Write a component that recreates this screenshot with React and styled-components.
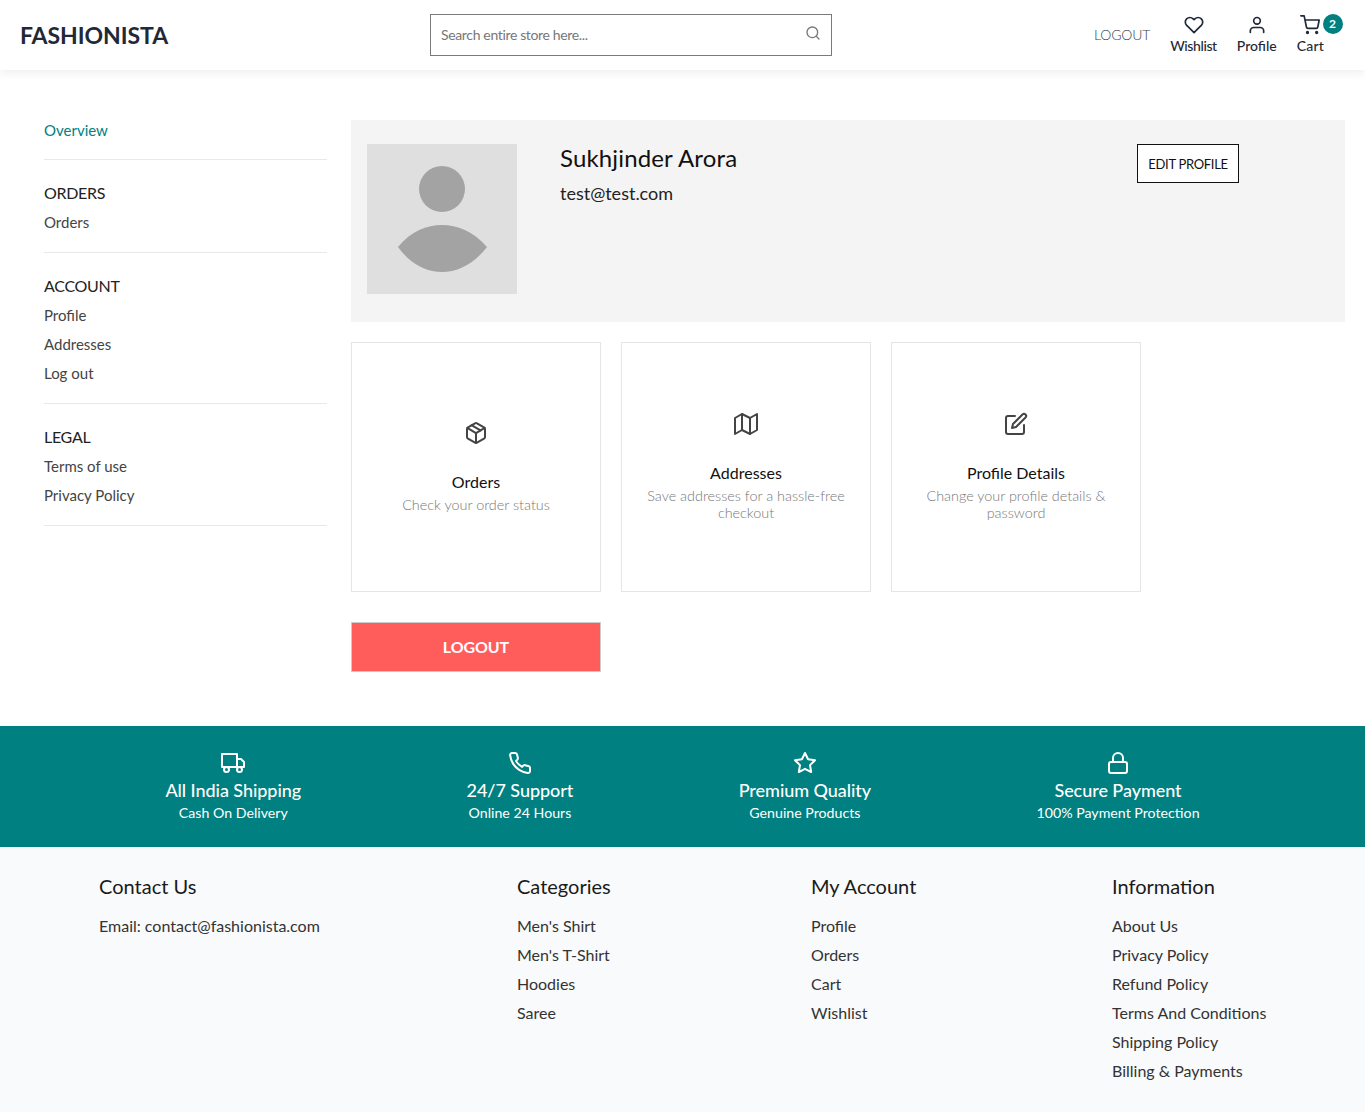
import React from "react";
import styled, { createGlobalStyle } from "styled-components";
import { FiHeart, FiShoppingCart, FiSearch, FiPackage, FiMap, FiEdit, FiTruck, FiPhone, FiStar, FiLock, FiUser } from "react-icons/fi";

const Global = createGlobalStyle`
  * { box-sizing: border-box; }
  html, body { margin: 0; background: #fff; font-family: "Lato", "Liberation Sans", sans-serif; }
  a { text-decoration: none; color: inherit; }
`;

const Header = styled.header`
  height: 70px; display: flex; align-items: center; position: relative;
  padding: 0 20px; background: #fff; box-shadow: 0 4px 8px rgba(0,0,0,.06);
`;
const Logo = styled.div`
  width: 410px; font-size: 23px; font-weight: 700; color: #1f2937; letter-spacing: -.05px;
`;
const Search = styled.div`
  width: 402px; height: 42px; border: 1px solid #7a7a7a; display: flex; align-items: center;
  justify-content: space-between; padding: 0 10px 2px; color: #777; font-size: 14px; letter-spacing: -.35px;
  svg { font-size: 16px; color: #777; margin-top: -2px; }
`;
const Actions = styled.div`
  margin-left: auto; display: flex; align-items: center; gap: 20px; padding-right: 21px;
`;
const TopLogout = styled.span`
  font-size: 14px; color: #374151; margin-bottom: 1px; font-weight: 300; letter-spacing: -.15px;
`;
const Action = styled.div`
  display: flex; flex-direction: column; align-items: center; position: relative;
  color: #1f2937; font-size: 14px; font-weight: 500; line-height: 18px; gap: 2px;
  letter-spacing: ${p => p.$track || 0};
  svg { font-size: 20px; display: block; }
`;
const Badge = styled.span`
  position: absolute; left: 26px; top: -1px; width: 20px; height: 20px; border-radius: 50%;
  background: #008080; color: #fff; font-size: 12px; font-weight: 700;
  display: flex; align-items: center; justify-content: center;
`;

const Body = styled.div`
  display: flex; padding: 50px 20px 54px 44px; gap: 24px; height: 656px;
`;
const Side = styled.aside`
  width: 283px; flex: none;
`;
const SideGroup = styled.div`
  border-bottom: 1px solid #e8e8e8; padding: ${p => p.$first ? "0 0 19px" : "19px 0 15px"};
`;
const SideTitle = styled.div`
  font-size: 16px; line-height: 28px; margin-bottom: 1px; color: #222; letter-spacing: -.3px;
`;
const SideLink = styled.a`
  display: block; font-size: 15px; font-weight: 400;
  line-height: ${p => p.$active ? "20px" : "29px"};
  color: ${p => p.$active ? "#008080" : "#444"};
`;
const Main = styled.main`
  flex: 1; display: flex; flex-direction: column; align-items: flex-start;
`;
const ProfileBox = styled.section`
  width: 100%; height: 202px; background: #f4f4f4; padding: 24px 16px; display: flex; position: relative;
`;
const Avatar = styled.div`
  width: 150px; height: 150px; flex: none; background: #dfdfdf;
  svg { display: block; }
`;
const Who = styled.div`
  margin: -1px 0 0 43px; flex: 1;
`;
const Name = styled.div`
  font-size: 24px; line-height: 30px; color: #111; letter-spacing: .15px;
`;
const Mail = styled.div`
  font-size: 18px; line-height: 24px; color: #222; margin-top: 8px; font-weight: 400;
`;
const EditBtn = styled.button`
  width: 102px; height: 39px; margin-right: 90px; border: 1px solid #111; background: #fff;
  font: 400 13px "Lato", sans-serif; letter-spacing: -.3px; color: #111; padding: 0; flex: none;
`;
const Cards = styled.div`
  display: flex; gap: 20px; margin-top: 20px;
`;
const Card = styled.div`
  width: 250px; height: 250px; border: 1px solid #e5e5e5; display: flex; flex-direction: column;
  align-items: center; justify-content: center; text-align: center; padding: 0 20px 1px;
  svg { font-size: 24px; color: #444; margin-bottom: 27px; }
`;
const CardTitle = styled.div`
  font-size: 16px; line-height: 20px; color: #111;
`;
const CardText = styled.div`
  font-size: 14.4px; line-height: 17px; color: #777; margin-top: 4px; font-weight: 300;
`;
const LogoutBtn = styled.button`
  width: 250px; height: 50px; margin-top: 30px; background: #ff5c5c; border: 1px solid #ccc;
  color: #fff; font: 700 16px "Lato", sans-serif; padding: 0 0 2px; letter-spacing: -.1px;
`;

const Band = styled.section`
  height: 121px; background: #008080; display: flex; justify-content: space-evenly; align-items: center; color: #fff;
`;
const Perk = styled.div`
  display: flex; flex-direction: column; align-items: center;
  svg { font-size: 24px; margin-bottom: 3px; }
`;
const PerkTitle = styled.div`
  font-size: 18px; line-height: 24px; font-weight: 500; margin-bottom: 1px; letter-spacing: -.05px;
`;
const PerkText = styled.div`
  font-size: 14.2px; line-height: 19px; font-weight: 400;
`;

const Footer = styled.footer`
  background: #f9fafb; height: 265px; padding: 25px 0 0 99px; display: grid;
  grid-template-columns: 418px 294px 301px 1fr;
`;
const ColTitle = styled.div`
  font-size: 20px; line-height: 28px; color: #1a1a1a; margin-bottom: 11px;
`;
const FootLink = styled.a`
  display: block; font-size: 16px; line-height: 29px; color: #333; font-weight: 400;
`;

const Section = ({ title, links }) => (
  <SideGroup>
    <SideTitle>{title}</SideTitle>
    {links.map(l => <SideLink key={l}>{l}</SideLink>)}
  </SideGroup>
);

const Col = ({ title, links }) => (
  <div>
    <ColTitle>{title}</ColTitle>
    {links.map(l => <FootLink key={l}>{l}</FootLink>)}
  </div>
);

export default function App() {
  return (
    <>
      <Global />
      <Header>
        <Logo>FASHIONISTA</Logo>
        <Search>Search entire store here...<FiSearch /></Search>
        <Actions>
          <TopLogout>LOGOUT</TopLogout>
          <Action $track="-.4px"><FiHeart />Wishlist</Action>
          <Action><FiUser />Profile</Action>
          <Action $track=".2px"><FiShoppingCart />Cart<Badge>2</Badge></Action>
        </Actions>
      </Header>
      <Body>
        <Side>
          <SideGroup $first><SideLink $active>Overview</SideLink></SideGroup>
          <Section title="ORDERS" links={["Orders"]} />
          <Section title="ACCOUNT" links={["Profile", "Addresses", "Log out"]} />
          <Section title="LEGAL" links={["Terms of use", "Privacy Policy"]} />
        </Side>
        <Main>
          <ProfileBox>
            <Avatar>
              <svg width="150" height="150" viewBox="0 0 150 150">
                <circle cx="75" cy="45" r="23" fill="#a3a3a3" />
                <path d="M31 103 C44 87 60 81 75 81 C90 81 106 87 120 103 C106 121 90 128 75 128 C60 128 44 121 31 103 Z" fill="#a3a3a3" />
              </svg>
            </Avatar>
            <Who>
              <Name>Sukhjinder Arora</Name>
              <Mail>test@test.com</Mail>
            </Who>
            <EditBtn>EDIT PROFILE</EditBtn>
          </ProfileBox>
          <Cards>
            <Card><FiPackage /><CardTitle>Orders</CardTitle><CardText>Check your order status</CardText></Card>
            <Card><FiMap /><CardTitle>Addresses</CardTitle><CardText>Save addresses for a hassle-free checkout</CardText></Card>
            <Card><FiEdit /><CardTitle>Profile Details</CardTitle><CardText>Change your profile details &amp; password</CardText></Card>
          </Cards>
          <LogoutBtn>LOGOUT</LogoutBtn>
        </Main>
      </Body>
      <Band>
        <Perk><FiTruck /><PerkTitle>All India Shipping</PerkTitle><PerkText>Cash On Delivery</PerkText></Perk>
        <Perk><FiPhone /><PerkTitle>24/7 Support</PerkTitle><PerkText>Online 24 Hours</PerkText></Perk>
        <Perk><FiStar /><PerkTitle>Premium Quality</PerkTitle><PerkText>Genuine Products</PerkText></Perk>
        <Perk><FiLock /><PerkTitle>Secure Payment</PerkTitle><PerkText>100% Payment Protection</PerkText></Perk>
      </Band>
      <Footer>
        <Col title="Contact Us" links={["Email: contact@fashionista.com"]} />
        <Col title="Categories" links={["Men's Shirt", "Men's T-Shirt", "Hoodies", "Saree"]} />
        <Col title="My Account" links={["Profile", "Orders", "Cart", "Wishlist"]} />
        <Col title="Information" links={["About Us", "Privacy Policy", "Refund Policy", "Terms And Conditions", "Shipping Policy", "Billing & Payments"]} />
      </Footer>
    </>
  );
}
